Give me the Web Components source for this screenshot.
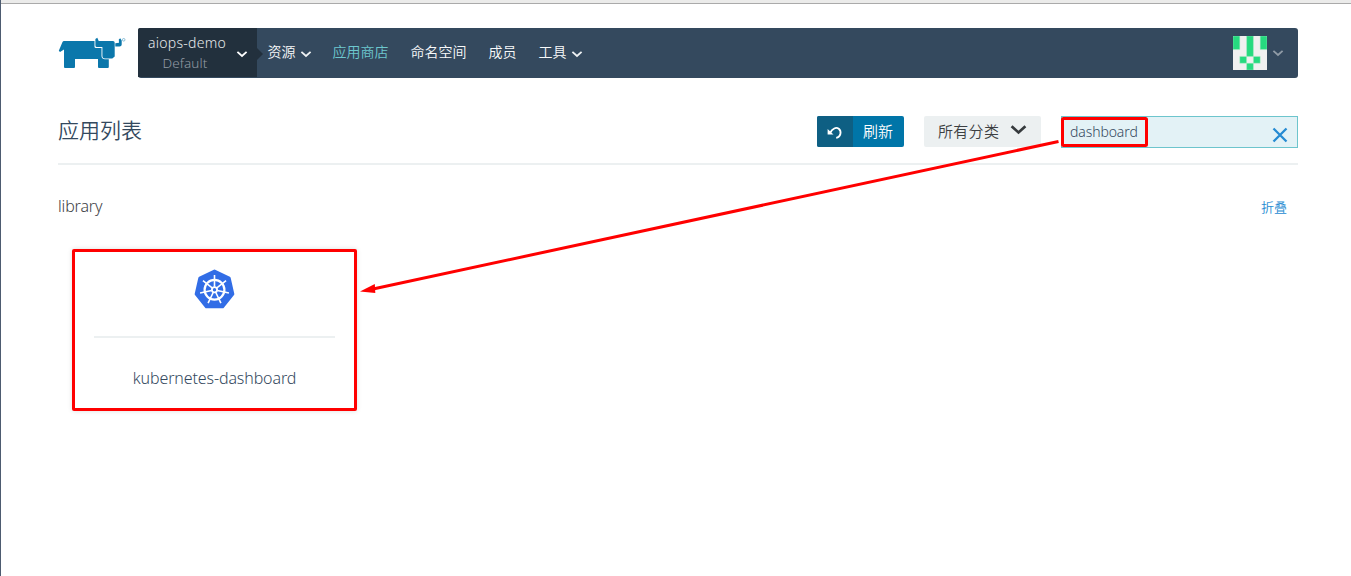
<!DOCTYPE html>
<html lang="zh-CN">
<head>
<meta charset="utf-8">
<title>应用列表</title>
<style>
html,body{margin:0;height:100%;overflow:hidden;background:#fff}
body{font-family:"Noto Sans","Noto Sans CJK SC",sans-serif;font-weight:300}
</style>
</head>
<body>
<catalog-page></catalog-page>
<script>
const define = (name, css, html) => customElements.define(name, class extends HTMLElement {
  constructor() {
    super();
    this.attachShadow({mode: 'open'}).innerHTML = `<style>*,:host{box-sizing:border-box}${css}</style>${html}`;
  }
});

define('chevron-icon', `:host{display:block;width:10px;height:6px}svg{display:block;width:100%;height:100%;overflow:visible}`,
  `<svg viewBox="0 0 10 6"><path d="M.4.8 5 5 9.6.8" fill="none" stroke="currentColor" stroke-width="1.8"/></svg>`);

define('brand-logo', `:host{display:block;width:80px;height:50px}svg{display:block}`,
  `<svg width="80" height="50" viewBox="58 28 80 50"><g fill="#0b77ab">
  <path d="M64 41H94.5V46.8Q94.5 48 96 48H101.5V56Q101.5 59 105 59.3H108.8V67Q108.8 68 107.8 68H99Q98 68 98 67V59H75V67Q75 68 74 68H65Q64 68 64 67V49.5L60 52 58.8 50.8 62.5 42Q63 41 64 41Z"/>
  <path d="M95.4 39 97.3 37.8 98.7 41H113Q114.7 41 114.7 42.7V56.5L112.3 58.5H105Q102.4 58.5 102.4 56V47H97Q95.4 47 95.4 45.5Z"/>
  <path d="M115.3 43.2 119 42.7 118.8 39.5 120.2 38.3 121.7 40.5V44.5Q121.7 46.5 119.5 46.5H115.3Z"/></g>
  <circle cx="123.7" cy="39.8" r="1.3" fill="none" stroke="#70aecd" stroke-width=".8"/></svg>`);

define('project-switch', `:host{display:flex;align-items:center;position:relative;width:119px;height:49px;background:#22303d;color:#e7eaec;border-radius:2px 0 0 0;padding-left:10px}
  .t{width:79px;text-align:center;font-size:14px;line-height:21px;white-space:nowrap}.a{letter-spacing:.27px;margin-left:-1px}.d{color:#929ba4;font-size:13.5px;padding-right:5px;letter-spacing:.1px}
  chevron-icon{margin:3px 0 0 10px;color:#fff}
  :host::after{content:"";position:absolute;left:119px;top:20px;border:6px solid transparent;border-right:0;border-left-color:#22303d}`,
  `<div class="t"><div class="a">aiops-demo</div><div class="d">Default</div></div><chevron-icon></chevron-icon>`);

define('nav-item', `:host{display:flex;align-items:center;height:47px;font-size:14px;font-weight:350;line-height:20px;color:#f8f9fa;white-space:nowrap}
  :host([active]){color:#6dc8cf}chevron-icon{display:none;margin:4px 0 0 5px;color:#eef1f3}:host([menu]) chevron-icon{display:block}`,
  `<slot></slot><chevron-icon></chevron-icon>`);

define('user-avatar', `:host{display:block;width:34px;height:34px}svg{display:block}`,
  `<svg width="34" height="34" viewBox="0 0 34 34"><path fill="#f0f0f0" d="M0 0h34v34H0z"/><path fill="#26da7f" stroke="#b4eacb" stroke-width=".4" d="M0 0h6.8v13.6H0zM13.6 0h6.8v20.4h-6.8zM27.2 0H34v13.6h-6.8zM6.8 20.4h6.8v6.8H6.8zM20.4 20.4h6.8v6.8h-6.8zM13.6 27.2h6.8V34h-6.8z"/></svg>`);

define('top-nav', `:host{display:flex;height:50px}
  nav{flex:1;display:flex;background:#34495e;border-radius:3px;padding-right:15px}
  .items{display:flex;margin-left:10.5px}
  .items>*+*{margin-left:22px}
  .user{margin-left:auto;display:flex;align-items:center;color:#909ba6}.user chevron-icon{margin-left:6px;width:10px}`,
  `<brand-logo></brand-logo><nav><project-switch></project-switch><div class="items">
  <nav-item menu>资源</nav-item><nav-item active>应用商店</nav-item><nav-item>命名空间</nav-item><nav-item>成员</nav-item><nav-item menu>工具</nav-item></div>
  <div class="user"><user-avatar></user-avatar><chevron-icon></chevron-icon></div></nav>`);

define('refresh-button', `:host{display:flex;width:87px;height:31px;border-radius:2px;overflow:hidden;background:#0075a8;color:#fff;font-size:15px;font-weight:350;line-height:31px}
  .i{width:36px;background:#0e5f83;display:grid;place-items:center}.i svg{margin-top:3px}.l{padding-left:10px}`,
  `<div class="i"><svg width="16" height="14" viewBox="0 0 16 14"><path d="M3 7C5.5 2.5 9 .8 11.8 2.8c3.1 2.7 2 8.3-2.6 9" fill="none" stroke="#fff" stroke-width="1.8"/><path d="M.6 3V8.5H6.5z" fill="#fff"/></svg></div><span class="l"><slot></slot></span>`);

define('category-select', `:host{display:flex;align-items:center;width:117px;height:31px;border-radius:2px;background:#ecf0f1;color:#3c3f42;padding-left:14px;font-size:15px;font-weight:350;line-height:31px;letter-spacing:.3px}
  span{margin-top:-1px}chevron-icon{width:15px;height:9px;margin:-4px 0 0 12px;color:#363a3d}`,
  `<span><slot></slot></span><chevron-icon></chevron-icon>`);

define('search-box', `:host{display:flex;align-items:center;justify-content:space-between;width:237px;height:32px;background:#e3f2f6;border:1px solid #6dc5cd;padding:0 9.5px 0 8px;color:#34495e;font-size:14px}
  svg{margin-top:6px}span{letter-spacing:-.1px;margin-top:-1px}`,
  `<span><slot></slot></span><svg width="16" height="16" viewBox="0 0 16 16"><path d="M1.5 1.5l13 13M14.5 1.5l-13 13" stroke="#268bd2" stroke-width="2.3"/></svg>`);

define('page-header', `:host{display:flex;height:49px;border-bottom:2px solid #ecf0f1;color:#34495e}
  h1{margin:0;font-size:21px;font-weight:350;line-height:29px}
  .actions{margin-left:auto;display:flex;gap:20px}`,
  `<h1>应用列表</h1><div class="actions"><refresh-button>刷新</refresh-button><category-select>所有分类</category-select><search-box>dashboard</search-box></div>`);

define('kube-icon', `:host{display:block;width:40px;height:40px}svg{display:block}`,
  (() => {
    const pt = (r, i) => { const a = i * 2 / 7 * Math.PI - Math.PI / 2; return `${(19.5 + r * Math.cos(a)).toFixed(2)} ${(20.8 + r * Math.sin(a)).toFixed(2)}`; };
    const idx = [0, 1, 2, 3, 4, 5, 6];
    return `<svg width="40" height="40" viewBox="0 0 40 40" overflow="visible"><path d="M${idx.map(i => pt(18.8, i)).join('L')}Z" fill="#326de6" stroke="#326de6" stroke-width="3" stroke-linejoin="round"/>
    <circle cx="19.5" cy="20.8" r="9.9" fill="none" stroke="#fff" stroke-width="2.2"/>
    <path d="${idx.map(i => `M${pt(3, i)}L${pt(14.8, i)}`).join('')}" stroke="#fff" stroke-width="1.6"/><circle cx="19.5" cy="20.8" r="2.6" fill="none" stroke="#fff" stroke-width="1.8"/></svg>`;
  })());

define('app-card', `:host{display:flex;flex-direction:column;align-items:center;width:285px;height:162px;border:3px solid #f00;border-radius:2px;padding:17px 19px 0;box-shadow:0 0 5px #0002;background:#fff}
  hr{width:241px;border:0;border-top:2px solid #ecf0f1;margin:27px 0 28px}
  .n{font-size:16px;line-height:24px;color:#34495e;white-space:nowrap;letter-spacing:-.12px}`,
  `<kube-icon></kube-icon><hr><div class="n"><slot></slot></div>`);

define('catalog-group', `:host{display:block}
  header{display:flex;justify-content:space-between;align-items:center;height:24px;padding-right:11px}
  .n{font-size:16px;color:#3d4144;letter-spacing:-.15px}.c{font-size:13px;font-weight:350;color:#268bd2}
  .cards{display:flex;padding:31px 14px 0}`,
  `<header><span class="n">library</span><span class="c">折叠</span></header><div class="cards"><slot></slot></div>`);

define('callout-overlay', `:host{position:absolute;inset:0;pointer-events:none}svg{display:block}`,
  `<svg width="1351" height="576" viewBox="0 0 1351 576"><path d="M1058.5 141.5 373 289" stroke="#f00" stroke-width="3" fill="none"/><path d="M360 291.5 374.8 284 375.3 292.9Z" fill="#f00"/><rect x="1062.5" y="118.5" width="84" height="27" rx="1" fill="none" stroke="#f00" stroke-width="3"/></svg>`);

define('catalog-page', `:host{display:flex;flex-direction:column;position:relative;width:1351px;height:576px;overflow:hidden;border-left:1px solid #4d5b70;background:#fff}
  .edge{height:4px;background:#ebebea;border-bottom:1px solid #aaa;flex:none}
  main{padding:24px 53px 0 57px}page-header{margin-top:38px}catalog-group{margin-top:29px}
  callout-overlay{left:-1px}`,
  `<div class="edge"></div><main><top-nav></top-nav><page-header></page-header><catalog-group><app-card>kubernetes-dashboard</app-card></catalog-group></main><callout-overlay></callout-overlay>`);
</script>
</body>
</html>
